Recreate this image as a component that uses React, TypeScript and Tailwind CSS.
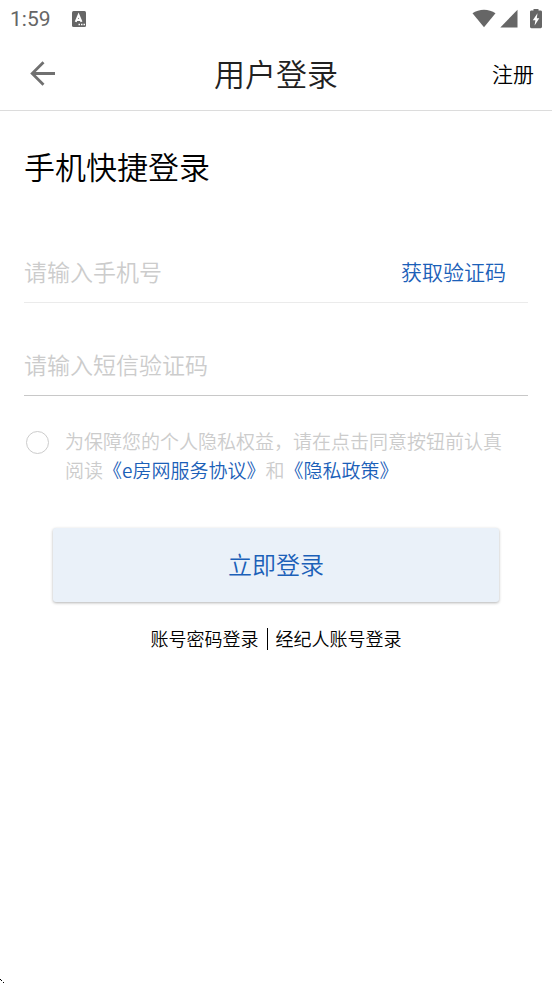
import React, { useState } from 'react';

const StatusBar: React.FC = () => (
  <div className="flex h-[38px] items-center justify-between pl-[10px] pr-[10px] text-[#666666]">
    <div className="flex items-center gap-5">
      <span className="font-[Roboto,sans-serif] text-[21px] font-normal leading-[38px]">1:59</span>
      <svg width="16" height="16" viewBox="0 0 16 16" aria-hidden="true">
        <rect x="1" y="0" width="14" height="16" rx="1.5" fill="currentColor" />
        <path d="M4.700 10.800L7.600 4L10.500 10.800M5.700 8.900H9.500" fill="none" stroke="#ffffff" strokeWidth="2" />
        <path d="M7.500 13.500h1.500M10 13.500h1.500M12.500 13.500h1.500" stroke="#ffffff" strokeWidth="1.4" />
      </svg>
    </div>
    <div className="flex items-center gap-1">
      <svg width="24" height="20" viewBox="0 0 24 20" fill="currentColor" aria-hidden="true">
        <path d="M0.500 4.300C7 -0.600 17 -0.600 23.500 4.300L12 18.300Z" />
      </svg>
      <svg width="18" height="20" viewBox="0 0 18 20" fill="currentColor" aria-hidden="true">
        <path d="M17.500 0.700V18.500H0.300Z" />
      </svg>
      <svg className="ml-2" width="12" height="20" viewBox="0 0 12 20" aria-hidden="true">
        <path d="M3.500 0h5v1.500h2.100c.8 0 1.400.6 1.400 1.400v14.900c0 .8-.6 1.400-1.400 1.400H1.400C.6 19.200 0 18.600 0 17.800V2.900C0 2.100.6 1.500 1.400 1.500H3.500Z" fill="currentColor" />
        <path d="M7.500 4.300L2.800 11.300H5.400L4.600 16.600L9.300 9.200H6.800Z" fill="#ffffff" />
      </svg>
    </div>
  </div>
);

const App: React.FC = () => {
  const [phone, setPhone] = useState('');
  const [code, setCode] = useState('');
  const [agreed, setAgreed] = useState(false);

  return (
    <div className="relative min-h-screen bg-white font-['Noto_Sans_CJK_SC',sans-serif] font-[350] text-black">
      <StatusBar />

      <header className="grid h-[73px] grid-cols-3 items-center border-b border-[#dcdcdc] px-[18px] pb-[2px]">
        <button type="button" aria-label="返回" className="justify-self-start pl-3 pt-[2px] text-[#707070]">
          <svg width="26" height="26" viewBox="0 0 26 26" fill="none" stroke="currentColor" strokeWidth="2.8" aria-hidden="true">
            <path d="M25 12.500H3M13.500 1.200L2.200 12.500L13.500 23.800" />
          </svg>
        </button>
        <h1 className="justify-self-center whitespace-nowrap text-[31px] font-[350] leading-[40px] text-[#212121]">用户登录</h1>
        <a href="#register" className="justify-self-end text-[21px] leading-[40px]">注册</a>
      </header>

      <main className="px-6">
        <h2 className="pt-[35px] text-[31px] font-[350] leading-[40px]">手机快捷登录</h2>

        <form onSubmit={(e) => e.preventDefault()}>
          <div className="mt-[57px] flex h-[60px] items-center border-b border-[#ebebeb] pb-[3px] pr-[22px]">
            <input
              type="tel"
              aria-label="手机号"
              placeholder="请输入手机号"
              value={phone}
              onChange={(e) => setPhone(e.target.value)}
              className="min-w-0 flex-1 text-[23px] leading-[40px] outline-none placeholder:text-[#cccccc]"
            />
            <button type="button" className="shrink-0 text-[21px] leading-[40px] text-[#1b60b8]">获取验证码</button>
          </div>

          <div className="mt-[33px] flex h-[60px] items-center border-b border-[#c8c8c8] pb-[3px]">
            <input
              type="text"
              aria-label="短信验证码"
              placeholder="请输入短信验证码"
              value={code}
              onChange={(e) => setCode(e.target.value)}
              className="min-w-0 flex-1 text-[23px] leading-[40px] outline-none placeholder:text-[#cccccc]"
            />
          </div>

          <div className="mt-[30px] flex items-start gap-4 pl-[2px]">
            <input
              id="agree"
              type="checkbox"
              checked={agreed}
              onChange={(e) => setAgreed(e.target.checked)}
              className="mt-[5px] size-[23px] shrink-0 appearance-none rounded-full border border-[#cccccc] checked:bg-[#1b60b8]"
            />
            <label htmlFor="agree" className="text-[19px] leading-[29px] text-[#cccccc]">
              为保障您的个人隐私权益，请在点击同意按钮前认真
              <br />
              阅读<a href="#service" className="text-[#1b60b8]">《e房网服务协议》</a>和<a href="#privacy" className="text-[#1b60b8]">《隐私政策》</a>
            </label>
          </div>

          <div className="px-[29px]">
            <button
              type="submit"
              className="mt-[44px] h-[74px] w-full rounded-[3px] bg-[#eaf1f9] pb-[2px] text-[24px] text-[#1b60b8] shadow-[0_1px_3px_rgba(0,0,0,0.3)]"
            >
              立即登录
            </button>
          </div>
        </form>

        <nav className="mt-[26px] flex items-center justify-center gap-2 text-[18px] leading-[20px]">
          <a href="#password" className="pb-[2px]">账号密码登录</a>
          <span className="h-[22px] w-px bg-black" />
          <a href="#agent" className="pb-[2px]">经纪人账号登录</a>
        </nav>
      </main>

      <svg className="absolute bottom-0 left-0" width="4" height="4" viewBox="0 0 4 4" aria-hidden="true">
        <path d="M0 0h1v1H0ZM1 1h1v1H1ZM3 3h1v1H3Z" />
      </svg>
    </div>
  );
};

export default App;
